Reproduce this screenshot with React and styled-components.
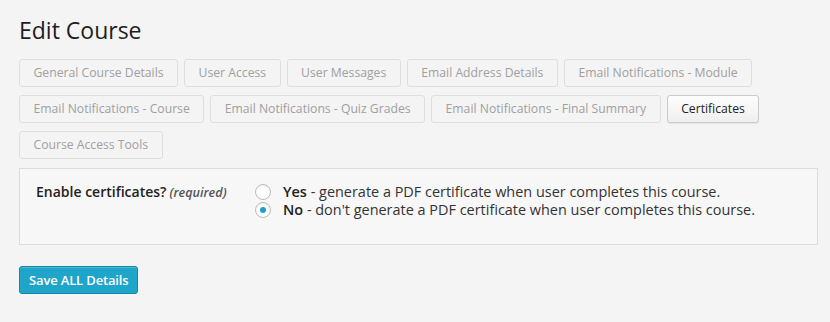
import React, { useState } from "react";
import styled, { createGlobalStyle } from "styled-components";

const GlobalStyle = createGlobalStyle`
  body {
    margin: 0;
    background: #f4f4f4;
    font-family: "Open Sans", "Liberation Sans", sans-serif;
    color: #333;
  }
`;

const Wrap = styled.div`
  padding: 16px 12px 30px 19px;
`;

const Title = styled.h2`
  margin: 0 0 14px;
  font-size: 23px;
  font-weight: 400;
  line-height: 29px;
  color: #1e1e1e;
`;

const Tabs = styled.nav`
  display: flex;
  flex-wrap: wrap;
  gap: 8px 6px;
  max-width: 760px;
`;

const Tab = styled.button`
  height: 28px;
  padding: 0 13.5px;
  font-family: inherit;
  font-size: 12.2px;
  line-height: 26px;
  border-radius: 3px;
  cursor: pointer;
  border: 1px solid ${(p) => (p.$active ? "#cacaca" : "#dedede")};
  color: ${(p) => (p.$active ? "#222" : "#a0a0a0")};
  background: ${(p) =>
    p.$active ? "linear-gradient(#fdfdfd, #efefef)" : "#f4f4f4"};
  box-shadow: ${(p) => (p.$active ? "0 1px 0 rgba(0,0,0,0.06)" : "none")};
`;

const Panel = styled.section`
  margin-top: 9px;
  display: flex;
  padding: 14px 16px 25px;
  background: #f7f7f7;
  border: 1px solid #dcdcdc;
`;

const Label = styled.div`
  width: 219px;
  flex: none;
  font-size: 14px;
  line-height: 18px;
  font-weight: 600;
  color: #222;

  & em {
    margin-left: 3px;
    font-size: 12.6px;
    font-weight: 600;
    color: #555;
  }
`;

const Options = styled.div`
  display: flex;
  flex-direction: column;
`;

const Option = styled.label`
  display: flex;
  align-items: center;
  gap: 12px;
  font-size: 14.45px;
  line-height: 18px;
  color: #333;
  cursor: pointer;

  & b {
    font-weight: 600;
    color: #222;
  }
`;

const Radio = styled.span`
  width: 14px;
  height: 14px;
  flex: none;
  border-radius: 50%;
  border: 1px solid #bcbcbc;
  background: #fff;
  box-shadow: inset 0 1px 2px rgba(0, 0, 0, 0.08);
  display: flex;
  align-items: center;
  justify-content: center;

  &::after {
    content: "";
    width: 6px;
    height: 6px;
    border-radius: 50%;
    background: ${(p) => (p.$checked ? "#1e9fcf" : "transparent")};
  }
`;

const SaveButton = styled.button`
  margin-top: 21px;
  height: 28px;
  padding: 0 9px;
  font-family: inherit;
  font-size: 13px;
  font-weight: 600;
  letter-spacing: -0.15px;
  color: #fff;
  background: #1fa5c9;
  border: 1px solid #1089ad;
  border-radius: 3px;
  box-shadow: inset 0 1px 0 rgba(255, 255, 255, 0.2);
  cursor: pointer;
`;

const tabs = [
  "General Course Details",
  "User Access",
  "User Messages",
  "Email Address Details",
  "Email Notifications - Module",
  "Email Notifications - Course",
  "Email Notifications - Quiz Grades",
  "Email Notifications - Final Summary",
  "Certificates",
  "Course Access Tools",
];

export default function App() {
  const [enabled, setEnabled] = useState(false);
  return (
    <Wrap>
      <GlobalStyle />
      <Title>Edit Course</Title>
      <Tabs>
        {tabs.map((t) => (
          <Tab key={t} $active={t === "Certificates"}>
            {t}
          </Tab>
        ))}
      </Tabs>
      <Panel>
        <Label>
          Enable certificates?<em>(required)</em>
        </Label>
        <Options>
          <Option onClick={() => setEnabled(true)}>
            <Radio $checked={enabled} />
            <span>
              <b>Yes</b> - generate a PDF certificate when user completes this
              course.
            </span>
          </Option>
          <Option onClick={() => setEnabled(false)}>
            <Radio $checked={!enabled} />
            <span>
              <b>No</b> - don't generate a PDF certificate when user completes
              this course.
            </span>
          </Option>
        </Options>
      </Panel>
      <SaveButton>Save ALL Details</SaveButton>
    </Wrap>
  );
}
